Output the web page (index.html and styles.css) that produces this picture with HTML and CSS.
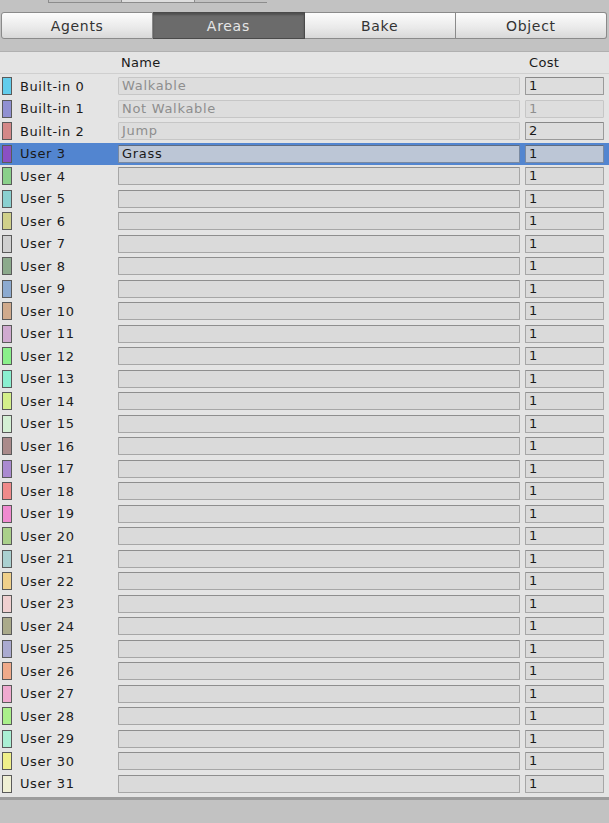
FILE: index.html
```html
<!DOCTYPE html>
<html lang="en">
<head>
  <meta charset="UTF-8">
  <title>Navigation - Areas</title>
  <link rel="stylesheet" href="styles.css">
</head>
<body>
  <div class="tabstrip">
    <span class="tab"></span>
    <span class="tab active"></span>
    <span class="tab"></span>
  </div>
  <div class="toolbar">
    <button class="seg first">Agents</button>
    <button class="seg on">Areas</button>
    <button class="seg">Bake</button>
    <button class="seg last">Object</button>
  </div>

  <div class="panel">
    <div class="head">
      <span class="h-name">Name</span>
      <span class="h-cost">Cost</span>
    </div>
    <div class="list">
      <div class="row builtin"><span class="swatch" style="background:#62cdec"></span><span class="label">Built-in 0</span><span class="field name">Walkable</span><span class="field cost live">1</span></div>
      <div class="row builtin"><span class="swatch" style="background:#9090d2"></span><span class="label">Built-in 1</span><span class="field name">Not Walkable</span><span class="field cost">1</span></div>
      <div class="row builtin"><span class="swatch" style="background:#d48888"></span><span class="label">Built-in 2</span><span class="field name">Jump</span><span class="field cost live">2</span></div>
      <div class="row sel"><span class="swatch" style="background:#8a50c4"></span><span class="label">User 3</span><span class="field name">Grass</span><span class="field cost">1</span></div>
      <div class="row"><span class="swatch" style="background:#8ad08a"></span><span class="label">User 4</span><span class="field name"></span><span class="field cost">1</span></div>
      <div class="row"><span class="swatch" style="background:#8ad0d0"></span><span class="label">User 5</span><span class="field name"></span><span class="field cost">1</span></div>
      <div class="row"><span class="swatch" style="background:#d0d08a"></span><span class="label">User 6</span><span class="field name"></span><span class="field cost">1</span></div>
      <div class="row"><span class="swatch" style="background:#d0d0d0"></span><span class="label">User 7</span><span class="field name"></span><span class="field cost">1</span></div>
      <div class="row"><span class="swatch" style="background:#8caa8c"></span><span class="label">User 8</span><span class="field name"></span><span class="field cost">1</span></div>
      <div class="row"><span class="swatch" style="background:#8caad0"></span><span class="label">User 9</span><span class="field name"></span><span class="field cost">1</span></div>
      <div class="row"><span class="swatch" style="background:#d0aa8c"></span><span class="label">User 10</span><span class="field name"></span><span class="field cost">1</span></div>
      <div class="row"><span class="swatch" style="background:#d0aad0"></span><span class="label">User 11</span><span class="field name"></span><span class="field cost">1</span></div>
      <div class="row"><span class="swatch" style="background:#8af08a"></span><span class="label">User 12</span><span class="field name"></span><span class="field cost">1</span></div>
      <div class="row"><span class="swatch" style="background:#8af0d0"></span><span class="label">User 13</span><span class="field name"></span><span class="field cost">1</span></div>
      <div class="row"><span class="swatch" style="background:#d4f08a"></span><span class="label">User 14</span><span class="field name"></span><span class="field cost">1</span></div>
      <div class="row"><span class="swatch" style="background:#d4f0d4"></span><span class="label">User 15</span><span class="field name"></span><span class="field cost">1</span></div>
      <div class="row"><span class="swatch" style="background:#aa8a8a"></span><span class="label">User 16</span><span class="field name"></span><span class="field cost">1</span></div>
      <div class="row"><span class="swatch" style="background:#aa8ad0"></span><span class="label">User 17</span><span class="field name"></span><span class="field cost">1</span></div>
      <div class="row"><span class="swatch" style="background:#f08a8a"></span><span class="label">User 18</span><span class="field name"></span><span class="field cost">1</span></div>
      <div class="row"><span class="swatch" style="background:#f08ad0"></span><span class="label">User 19</span><span class="field name"></span><span class="field cost">1</span></div>
      <div class="row"><span class="swatch" style="background:#aad08a"></span><span class="label">User 20</span><span class="field name"></span><span class="field cost">1</span></div>
      <div class="row"><span class="swatch" style="background:#aad0d0"></span><span class="label">User 21</span><span class="field name"></span><span class="field cost">1</span></div>
      <div class="row"><span class="swatch" style="background:#f0d08a"></span><span class="label">User 22</span><span class="field name"></span><span class="field cost">1</span></div>
      <div class="row"><span class="swatch" style="background:#f0d0d0"></span><span class="label">User 23</span><span class="field name"></span><span class="field cost">1</span></div>
      <div class="row"><span class="swatch" style="background:#aaaa8a"></span><span class="label">User 24</span><span class="field name"></span><span class="field cost">1</span></div>
      <div class="row"><span class="swatch" style="background:#aaaad0"></span><span class="label">User 25</span><span class="field name"></span><span class="field cost">1</span></div>
      <div class="row"><span class="swatch" style="background:#f0aa8a"></span><span class="label">User 26</span><span class="field name"></span><span class="field cost">1</span></div>
      <div class="row"><span class="swatch" style="background:#f0aad0"></span><span class="label">User 27</span><span class="field name"></span><span class="field cost">1</span></div>
      <div class="row"><span class="swatch" style="background:#aaf08a"></span><span class="label">User 28</span><span class="field name"></span><span class="field cost">1</span></div>
      <div class="row"><span class="swatch" style="background:#aaf0d4"></span><span class="label">User 29</span><span class="field name"></span><span class="field cost">1</span></div>
      <div class="row"><span class="swatch" style="background:#f0f08a"></span><span class="label">User 30</span><span class="field name"></span><span class="field cost">1</span></div>
      <div class="row"><span class="swatch" style="background:#f0f0d4"></span><span class="label">User 31</span><span class="field name"></span><span class="field cost">1</span></div>
    </div>
  </div>
</body>
</html>
```

FILE: styles.css
```css
body {
  margin: 0;
  background: #c2c2c2;
  font-family: "DejaVu Sans", Verdana, sans-serif;
  color: #1a1a1a;
}
.tabstrip {
  display: flex;
  height: 3px;
  padding-left: 48px;
}
.tab {
  width: 72px;
  border-left: 1px solid #8c8c8c;
  border-bottom: 1px solid #8c8c8c;
}
.tab.active {
  background: #dedede;
}
.toolbar {
  display: flex;
  padding: 9px 2px 0 1px;
  height: 27px;
}
.seg {
  flex: 1;
  height: 27px;
  margin: 0;
  font-family: inherit;
  font-size: 14px;
  letter-spacing: 0.7px;
  color: #333;
  background: linear-gradient(to bottom, #fcfcfc, #e9e9e9 60%, #d8d8d8);
  border: 1px solid #8a8a8a;
  border-left: none;
  padding: 0;
}
.seg.first {
  border-left: 1px solid #8a8a8a;
  border-radius: 3px 0 0 3px;
}
.seg.last {
  border-radius: 0 3px 3px 0;
}
.seg.on {
  background: #6b6b6b;
  color: #e6e6e6;
  border-color: #4a4a4a;
  box-shadow: inset 0 2px 2px rgba(0, 0, 0, 0.25);
}
.panel {
  margin-top: 12px;
  background: #e4e4e4;
  border-top: 1px solid #b0b0b0;
  border-bottom: 3px solid #9c9c9c;
}
.head {
  display: flex;
  height: 21px;
  align-items: center;
  font-size: 13px;
  letter-spacing: 0.3px;
  border-bottom: 1px solid #cfcfcf;
}
.h-name {
  margin-left: 121px;
  width: 408px;
}
.list {
  padding: 1px 0 2px;
}
.row {
  display: flex;
  align-items: center;
  height: 22.5px;
  font-size: 13px;
}
.swatch {
  width: 8px;
  height: 16px;
  margin-left: 2px;
  border: 1px solid #5a5a5a;
  flex-shrink: 0;
}
.label {
  width: 97px;
  margin-left: 8px;
  letter-spacing: 0.6px;
}
.field {
  height: 16px;
  line-height: 16px;
  padding-left: 3px;
  background: #dadada;
  border: 1px solid #a6a6a6;
  border-top-color: #8e8e8e;
  border-radius: 1px;
  box-sizing: content-box;
  white-space: nowrap;
  overflow: hidden;
  letter-spacing: 0.7px;
}
.field.name {
  width: 397px;
  margin-left: 1px;
}
.field.cost {
  width: 74px;
  margin-left: 5px;
}
.builtin .field {
  color: #8e8e8e;
  border-color: #c6c6c6;
  background: #dddddd;
}
.builtin .field.live {
  color: #1a1a1a;
  border-color: #9a9a9a;
  border-top-color: #888;
}
.row.sel {
  background: #5285d0;
}
.row.sel .field {
  background: #bcc6d6;
  border-color: #7a8aa2;
  border-top-color: #5e6c82;
}
```
